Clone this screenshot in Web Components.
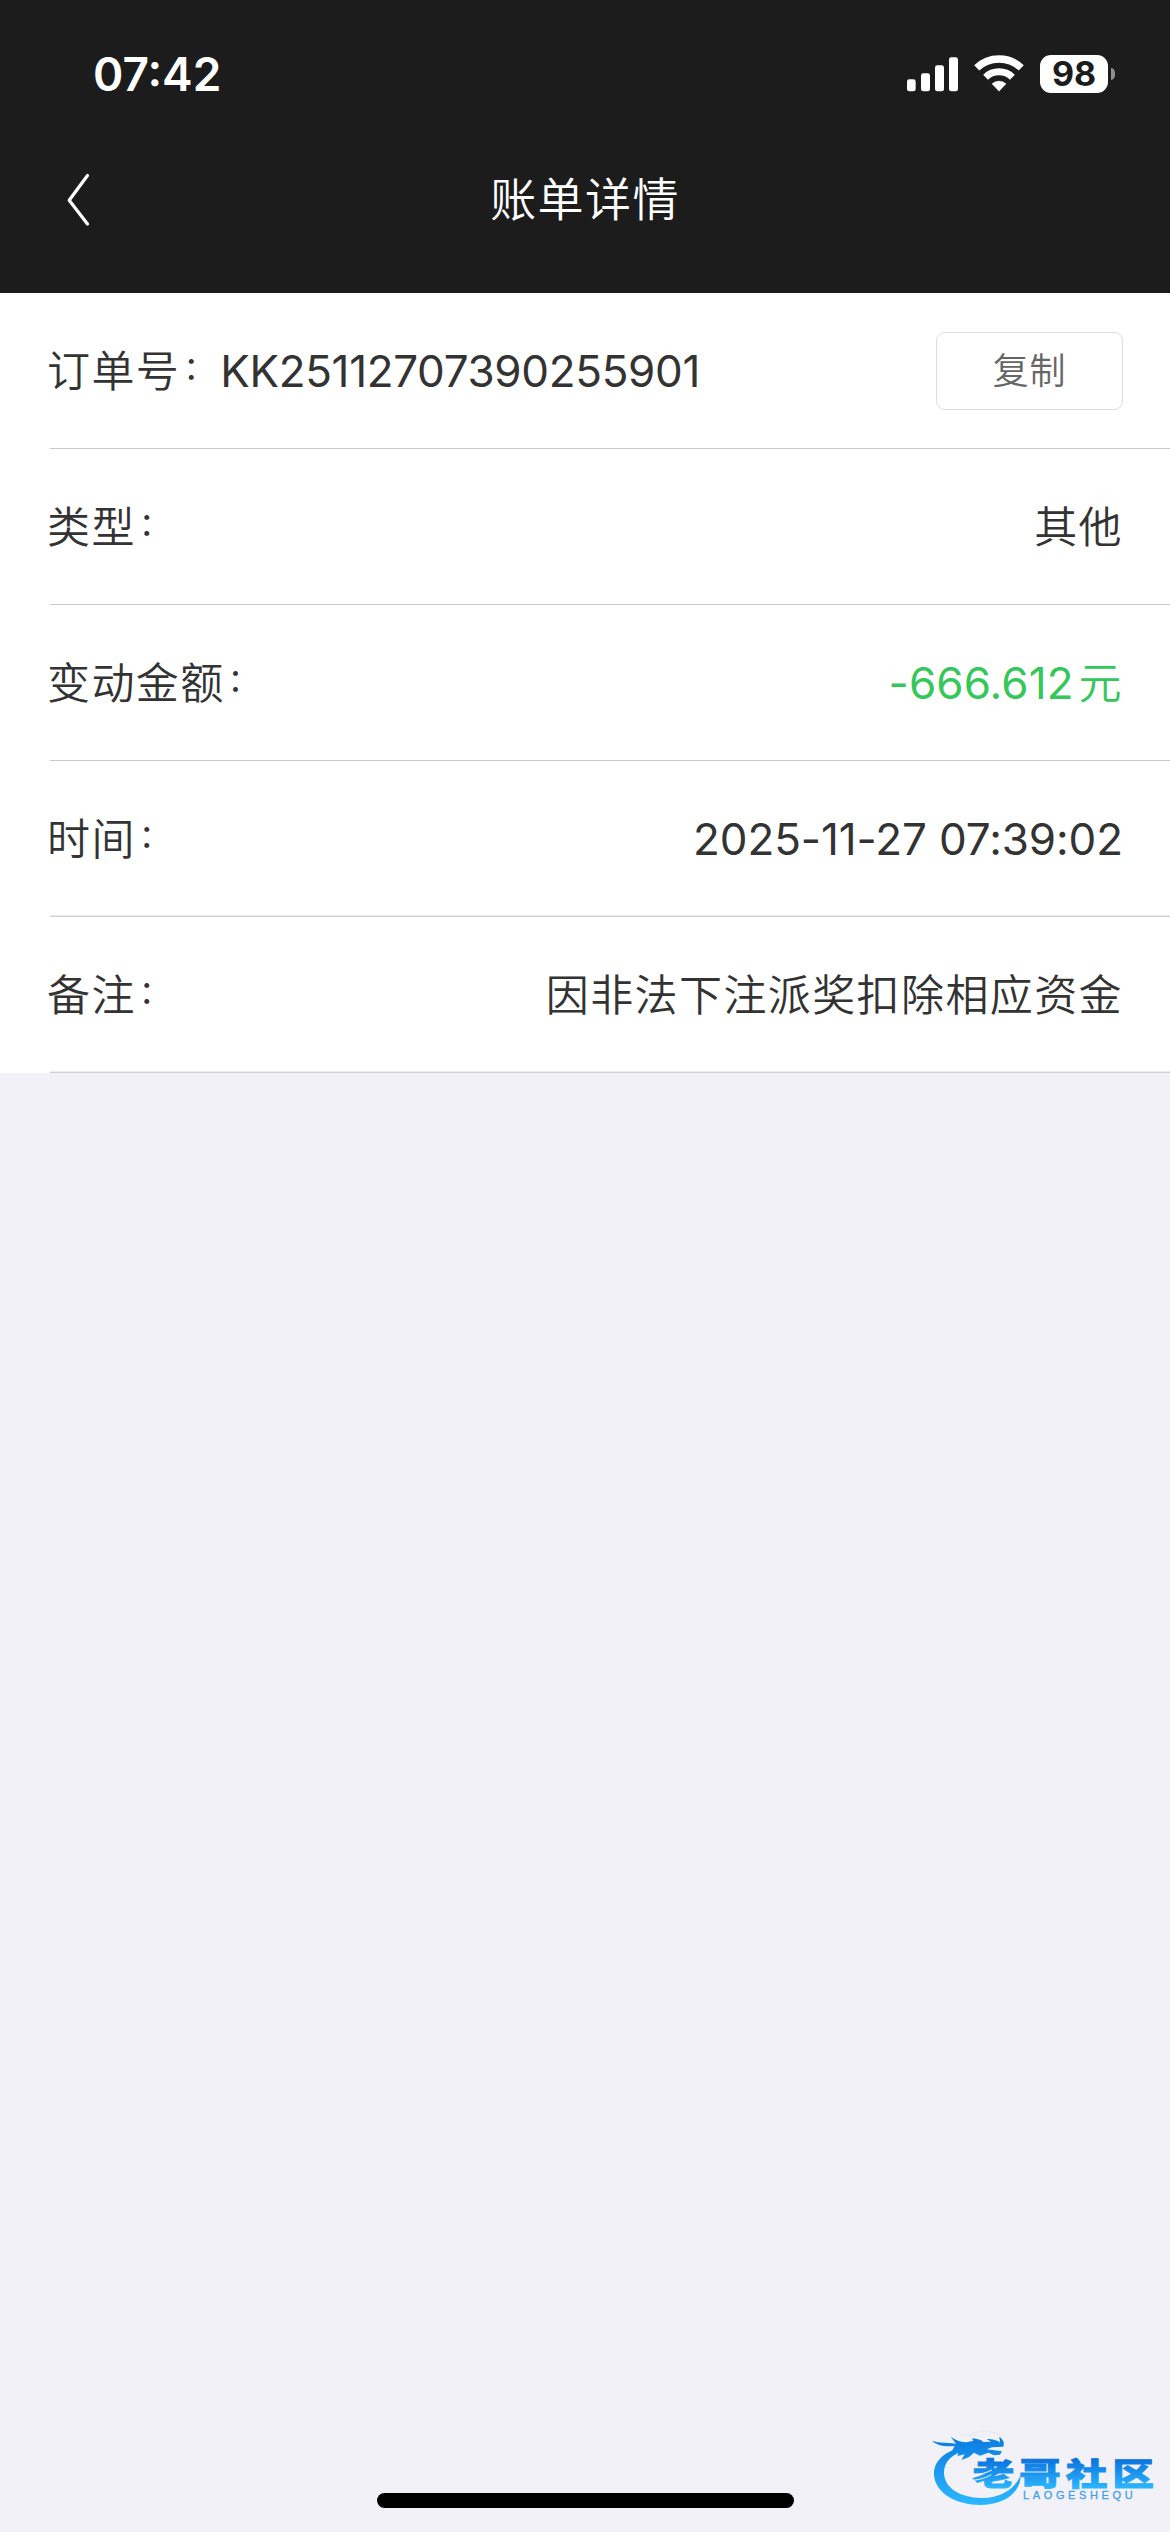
<!DOCTYPE html>
<html lang="zh-CN">
<head>
<meta charset="utf-8">
<title>账单详情</title>
<style>
html,body{margin:0;height:100%}
body{font-family:Inter,"Noto Sans CJK SC",sans-serif;color:#333}
</style>
</head>
<body>
<bill-page>
  <status-bar slot="top" time="07:42" battery="98"></status-bar>
  <nav-bar slot="top">账单详情</nav-bar>
  <bill-row label="订单号"><span slot="lead">KK25112707390255901</span><copy-button>复制</copy-button></bill-row>
  <bill-row label="类型"><bill-text>其他</bill-text></bill-row>
  <bill-row label="变动金额"><bill-amount unit="元">-666.612</bill-amount></bill-row>
  <bill-row label="时间" soft><bill-date>2025-11-27 07:39:02</bill-date></bill-row>
  <bill-row label="备注" soft><bill-text>因非法下注派奖扣除相应资金</bill-text></bill-row>
</bill-page>
<script>
const define = (name, html, setup) => customElements.define(name, class extends HTMLElement {
  connectedCallback() {
    if (this.shadowRoot) return;
    const t = document.createElement('template');
    t.innerHTML = html;
    this.attachShadow({mode: 'open'}).append(t.content.cloneNode(true));
    if (setup) setup(this, this.shadowRoot);
  }
});

define('bill-page', `<style>
:host{display:flex;flex-direction:column;position:relative;width:1170px;height:2532px;background:#f2f1f7;overflow:hidden}
header{height:293px;background:#1c1c1c;color:#fff;display:flex;flex-direction:column}
main{background:#fff;display:flex;flex-direction:column}
footer{margin-top:auto;padding-bottom:24px;display:flex;justify-content:center}
i{display:block;width:417px;height:15px;border-radius:8px;background:#000}
brand-mark{position:absolute;right:0;bottom:0}
</style><header><slot name="top"></slot></header><main><slot></slot></main><footer><i></i></footer><brand-mark></brand-mark>`);

define('status-bar', `<style>
:host{display:flex;height:148px;align-items:center;justify-content:space-between;padding:0 55px 0 93px;box-sizing:border-box;flex:none}
.time{font-size:46px;font-weight:600;line-height:56px}
.right{display:flex;align-items:center}
svg{display:block}
.batt{margin-left:16px;width:68px;height:38px;border-radius:11px;background:#fff;color:#1c1c1c;font-weight:700;font-size:34px;line-height:38px;text-align:center}
.nub{margin-left:3px;width:4px;height:12px;border-radius:0 5px 5px 0/0 6px 6px 0;background:#8e8e8e}
</style><span class="time"></span><div class="right">
<svg width="117" height="38" viewBox="51 44 351 114"><g fill="#fff"><rect x="51" y="117" width="26" height="36" rx="7"/><rect x="93" y="99" width="27" height="54" rx="7"/><rect x="135" y="75" width="27" height="78" rx="7"/><rect x="177" y="51" width="27" height="102" rx="7"/><path d="M327 153L305.7 130.5A31 31 0 0 1 348.3 130.5Z" stroke="#fff" stroke-width="1"/></g><g fill="none" stroke="#fff"><path d="M260.2 82.7A97 97 0 0 1 393.8 82.7" stroke-width="22"/><path d="M286.7 110.6A58.5 58.5 0 0 1 367.3 110.6" stroke-width="21"/></g></svg>
<div class="batt"></div><div class="nub"></div></div>`, (h, r) => {
  r.querySelector('.time').textContent = h.getAttribute('time');
  r.querySelector('.batt').textContent = h.getAttribute('battery');
});

define('nav-bar', `<style>
:host{display:grid;grid-template-columns:1fr auto 1fr;align-items:center;height:103px;flex:none}
svg{display:block;margin-left:66px}
h1{margin:0;padding-bottom:2px;font-size:46px;font-weight:350;line-height:60px;letter-spacing:1.4px}
</style><svg width="25" height="54" viewBox="0 0 25 54"><path d="M21.5 2.5L3.2 27.2L21.5 51" fill="none" stroke="#fff" stroke-width="3.2" stroke-linejoin="round" stroke-linecap="round"/></svg><h1><slot></slot></h1>`);

define('bill-row', `<style>
:host{display:flex;height:156px;align-items:center;justify-content:space-between;padding:0 47px;box-sizing:border-box;font-size:43px;line-height:60px;
background:linear-gradient(#c8c8c8,#c8c8c8) 50px 155px/1120px 1px no-repeat}
:host([soft]){background:linear-gradient(#ececec 50%,#cfcfd1 50%) 50px 154px/1120px 2px no-repeat}
.l{display:flex;align-items:center}
b{font-weight:350;letter-spacing:1.4px}
em{font-style:normal;font-weight:400;font-size:32px;width:40px;margin-left:3px;position:relative;top:-3px}
::slotted([slot=lead]){font-size:44px;font-weight:380;letter-spacing:-.33px;margin-left:-3px}
</style><div class="l"><b></b><em>：</em><slot name="lead"></slot></div><slot></slot>`, (h, r) => {
  r.querySelector('b').textContent = h.getAttribute('label');
});

define('bill-text', `<style>:host{display:block;font-weight:350;letter-spacing:1.4px}</style><slot></slot>`);
define('bill-date', `<style>:host{display:block;font-size:44px;font-weight:380;letter-spacing:-.1px}</style><slot></slot>`);
define('bill-amount', `<style>
:host{display:flex;align-items:center;color:#34c759}
.n{font-size:44px;letter-spacing:.1px;margin-right:5px}
.u{font-weight:350;letter-spacing:1.4px}
</style><span class="n"><slot></slot></span><span class="u"></span>`, (h, r) => {
  r.querySelector('.u').textContent = h.getAttribute('unit');
});
define('copy-button', `<style>
:host{display:block}
button{display:block;font:350 36px/50px Inter,"Noto Sans CJK SC",sans-serif;letter-spacing:.7px;color:#666;background:#fff;border:1px solid #ddd;border-radius:9px;width:187px;height:78px;padding:0;box-sizing:border-box}
</style><button><slot></slot></button>`);

define('brand-mark', `<style>:host{display:block}svg{display:block}</style>
<svg width="250" height="112" viewBox="0 0 750 336">
<defs>
<linearGradient id="ring" gradientUnits="userSpaceOnUse" x1="0" y1="50" x2="0" y2="250"><stop offset="0" stop-color="#0c7ce2"/><stop offset=".35" stop-color="#1590ea"/><stop offset="1" stop-color="#2cb6ff"/></linearGradient>
<linearGradient id="word" gradientUnits="userSpaceOnUse" x1="0" y1="118" x2="0" y2="205"><stop offset="0" stop-color="#0a74de"/><stop offset="1" stop-color="#2cb6ff"/></linearGradient>
</defs>
<g fill="none" stroke="#e2e8ef" stroke-width="3"><path d="M150 44C180 26 225 34 250 50"/><path d="M118 40C140 50 150 50 172 44"/></g>
<g fill="url(#ring)">
<path d="M150 78C80 86 40 120 42 165C46 220 110 256 185 255C250 254 302 220 302 166C285 208 240 235 185 234C120 233 74 205 72 160C71 125 95 102 135 92Z"/>
<path d="M36 63C60 70 84 67 108 71L92 50C108 62 124 67 140 67L160 62L156 55C172 56 184 60 190 66L213 65L200 57C216 57 234 61 240 68L238 50C251 60 254 70 250 80L216 82L200 88L246 94L240 104L222 106L205 98L180 107L162 98L146 112L124 120L134 103L112 108L118 92L96 92L104 78C80 80 56 80 36 63Z"/>
</g>
<g transform="scale(1.35 1)"><text x="117" y="195" font-family="Noto Sans CJK SC,sans-serif" font-weight="900" font-size="92" letter-spacing="11.7" fill="url(#word)" stroke="url(#word)" stroke-width="3">老哥社区</text></g>
<g fill="none" stroke="#f2f1f7" stroke-width="3"><path d="M158 163C180 164 200 158 216 150"/><path d="M158 181C185 178 200 172 214 164"/></g>
<text x="309" y="236" font-family="Liberation Sans,sans-serif" font-size="33" textLength="329" lengthAdjust="spacing" fill="#3d9fec" stroke="#3d9fec" stroke-width=".8">LAOGESHEQU</text>
</svg>`);
</script>
</body>
</html>
